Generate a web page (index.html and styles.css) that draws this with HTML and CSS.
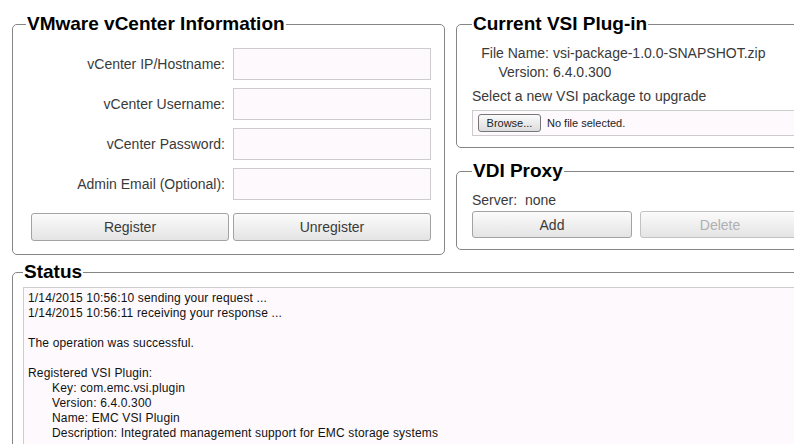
FILE: index.html
```html
<!DOCTYPE html>
<html lang="en">
<head>
  <meta charset="UTF-8" />
  <title>VSI Plug-in Registration</title>
  <meta name="viewport" content="width=device-width, initial-scale=1" />
  <link rel="stylesheet" href="styles.css">
</head>
<body>
  <div class="page">
    <div class="top">
      <fieldset class="box box-vcenter">
        <legend>VMware vCenter Information</legend>
        <div class="form">
          <label for="host">vCenter IP/Hostname:</label>
          <input id="host" class="field" type="text" />
          <label for="user">vCenter Username:</label>
          <input id="user" class="field" type="text" />
          <label for="pass">vCenter Password:</label>
          <input id="pass" class="field" type="password" />
          <label for="mail">Admin Email (Optional):</label>
          <input id="mail" class="field" type="text" />
        </div>
        <div class="actions">
          <button class="btn">Register</button>
          <button class="btn">Unregister</button>
        </div>
      </fieldset>

      <div class="side">
        <fieldset class="box box-right">
          <legend>Current VSI Plug-in</legend>
          <div class="info">
            <span class="info-label">File Name:</span>
            <span>vsi-package-1.0.0-SNAPSHOT.zip</span>
            <span class="info-label">Version:</span>
            <span>6.4.0.300</span>
          </div>
          <p class="hint">Select a new VSI package to upgrade</p>
          <div class="file-pick">
            <span class="browse">Browse...</span>
            <span class="file-name">No file selected.</span>
          </div>
        </fieldset>

        <fieldset class="box box-right box-proxy">
          <legend>VDI Proxy</legend>
          <p class="server">Server:&nbsp; none</p>
          <div class="proxy-actions">
            <button class="btn">Add</button>
            <button class="btn" disabled>Delete</button>
          </div>
        </fieldset>
      </div>
    </div>

    <fieldset class="box box-status">
      <legend>Status</legend>
      <div class="log">
        <div>1/14/2015 10:56:10 sending your request ...</div>
        <div>1/14/2015 10:56:11 receiving your response ...</div>
        <div>&nbsp;</div>
        <div>The operation was successful.</div>
        <div>&nbsp;</div>
        <div>Registered VSI Plugin:</div>
        <div class="indent">Key: com.emc.vsi.plugin</div>
        <div class="indent">Version: 6.4.0.300</div>
        <div class="indent">Name: EMC VSI Plugin</div>
        <div class="indent">Description: Integrated management support for EMC storage systems</div>
      </div>
    </fieldset>
  </div>
</body>
</html>
```

FILE: styles.css
```css
body {
  margin: 0;
  font-family: 'Liberation Sans', Arial, sans-serif;
  font-size: 14px;
  color: #3a3a3a;
  background: #fff;
  overflow: hidden;
}
.page {
  width: 830px;
  padding: 13px 0 0 12px;
}
.top {
  display: grid;
  grid-template-columns: 433px 1fr;
  column-gap: 11px;
  align-items: start;
}
.box {
  margin: 0;
  border: 1px solid #858585;
  border-radius: 5px;
  min-width: 0;
}
.box legend {
  font-size: 19px;
  line-height: 22px;
  font-weight: bold;
  color: #000;
  padding: 0 1px;
}
.box-vcenter {
  padding: 13px 13px 13px 13px;
}
.form {
  display: grid;
  grid-template-columns: 1fr 198px;
  column-gap: 8px;
  row-gap: 8px;
  align-items: center;
}
.form label {
  text-align: right;
}
.field {
  box-sizing: border-box;
  height: 32px;
  width: 198px;
  margin: 0;
  border: 1px solid #cdcdcd;
  background: #fdf9fd;
  font: inherit;
}
.actions {
  display: flex;
  justify-content: flex-end;
  gap: 4px;
  margin-top: 13px;
}
.btn {
  box-sizing: border-box;
  width: 198px;
  height: 28px;
  border: 1px solid #a2a2a2;
  border-radius: 3px;
  background: linear-gradient(#fbfbfb, #e4e4e4);
  font-family: inherit;
  font-size: 14px;
  color: #3a3a3a;
}
.btn:disabled {
  color: #b0b0b0;
  border-color: #c2c2c2;
}
.box-right {
  padding: 9px 15px 11px 15px;
}
.info {
  display: grid;
  grid-template-columns: 77px 1fr;
  column-gap: 4px;
  line-height: 19px;
}
.info-label {
  text-align: right;
}
.hint {
  margin: 5px 0 0;
  line-height: 18px;
}
.file-pick {
  display: flex;
  align-items: center;
  gap: 6px;
  box-sizing: border-box;
  width: 328px;
  height: 26px;
  margin-top: 5px;
  padding: 0 5px;
  border: 1px solid #cdcdcd;
  background: #fdf9fd;
}
.browse {
  box-sizing: border-box;
  width: 63px;
  height: 18px;
  line-height: 16px;
  text-align: center;
  font-size: 11px;
  color: #222;
  border: 1px solid #777;
  border-radius: 3px;
  background: linear-gradient(#fafafa, #dcdcdc);
}
.file-name {
  font-size: 11px;
  color: #222;
}
.box-proxy {
  margin-top: 12px;
}
.server {
  margin: 0;
  line-height: 18px;
}
.proxy-actions {
  display: flex;
  gap: 8px;
  margin-top: 2px;
}
.proxy-actions .btn {
  width: 160px;
  height: 27px;
}
.box-status {
  margin-top: 6px;
  padding: 4px 10px 0 10px;
}
.log {
  height: 200px;
  padding: 3px 4px;
  border: 1px solid #cdcdcd;
  background: #fdf9fd;
  font-size: 12px;
  line-height: 15px;
  letter-spacing: 0.16px;
  color: #111;
}
.indent {
  padding-left: 24px;
}
```
